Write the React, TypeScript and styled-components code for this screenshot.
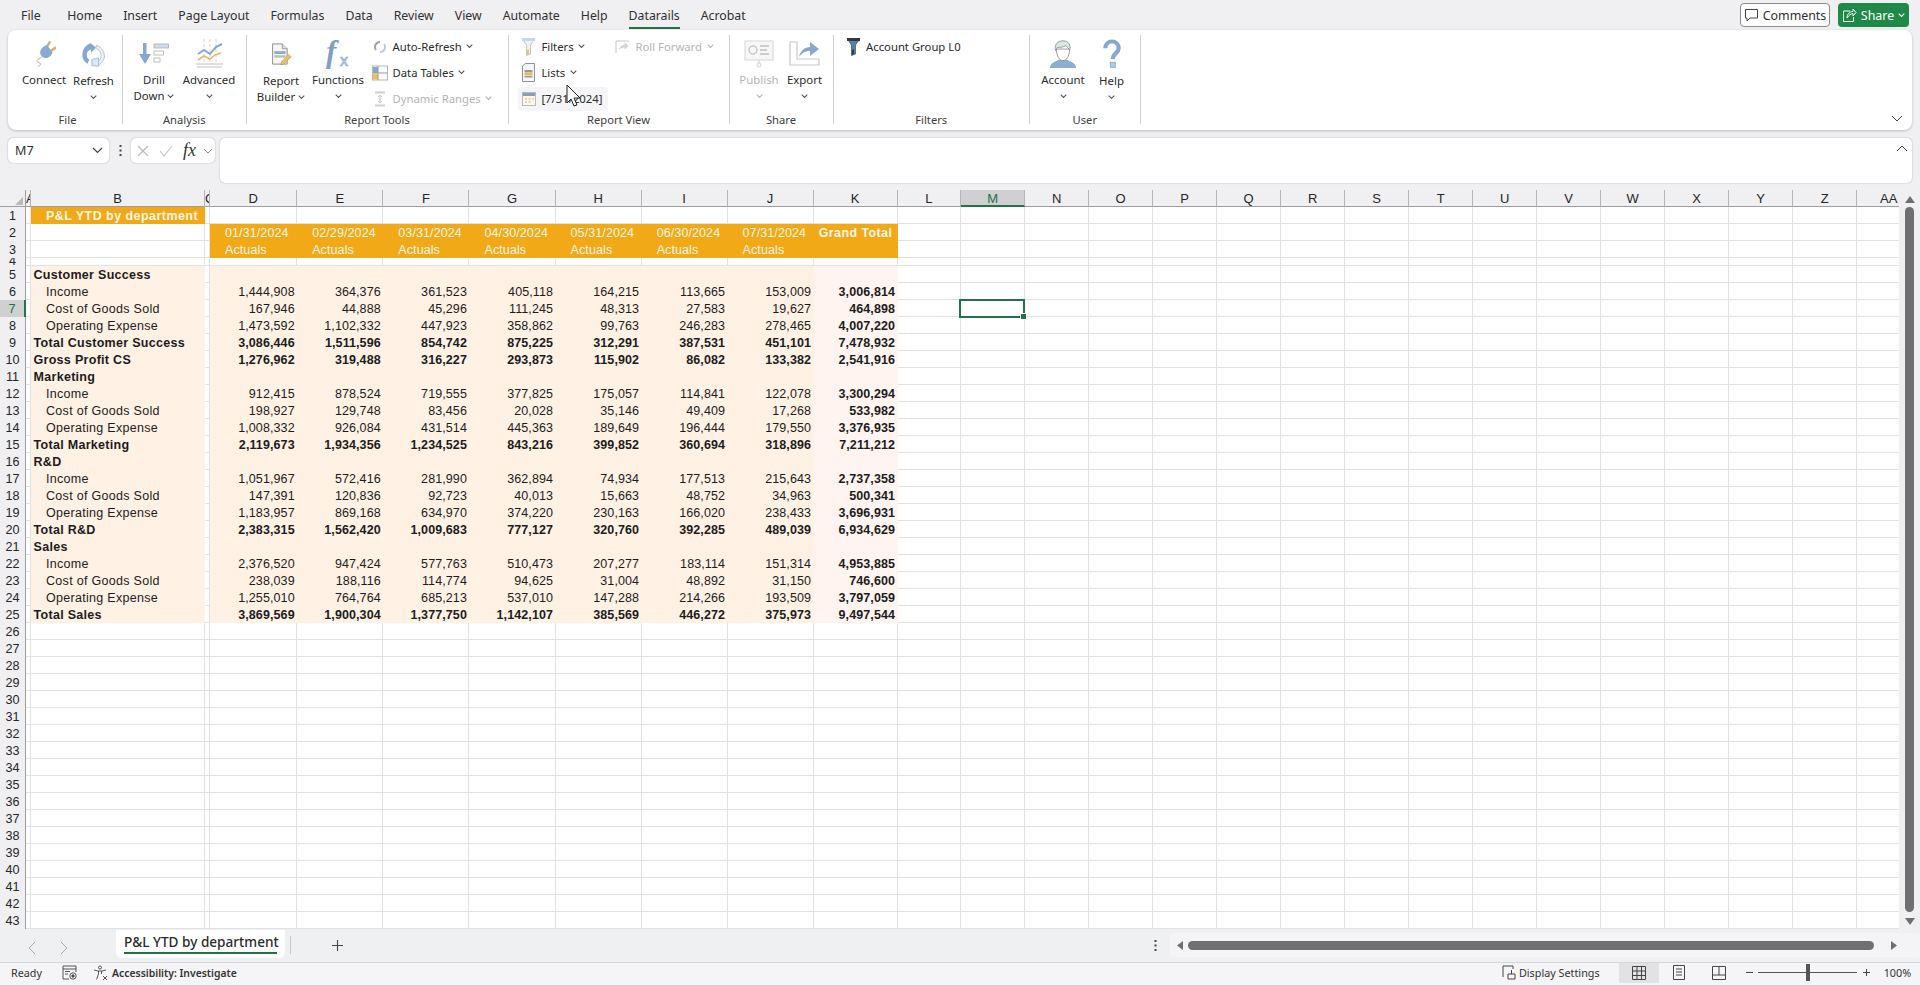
import React from 'react';
import styled, { createGlobalStyle } from 'styled-components';

const GlobalStyle = createGlobalStyle`
  html, body { margin: 0; padding: 0; background: #f0eff2; overflow: hidden; }
  #root { width: 1920px; height: 986px; }
  * { box-sizing: border-box; }
`;

const UI = '"Noto Sans", "Open Sans", sans-serif';
const SHEET = '"Liberation Sans", Arial, sans-serif';
const GREEN = '#217346';

const Page = styled.div`
  position: relative;
  width: 1920px;
  height: 986px;
  display: flex;
  flex-direction: column;
  background: #f0eff2;
  font-family: ${UI};
  color: #262626;
  overflow: hidden;
`;

/* ---------- title tabs ---------- */
const MenuBar = styled.div`
  height: 30px;
  display: flex;
  align-items: center;
  padding: 0 11px 0 21px;
`;
const MenuTab = styled.div<{ $active?: boolean }>`
  margin-right: 21px;
  font-size: 12.3px;
  color: #303030;
  border-bottom: ${p => (p.$active ? `2px solid ${GREEN}` : '2px solid transparent')};
  height: 28px;
  line-height: 29px;
  margin-top: 0;
  &:first-child { margin-right: 26.5px; }
`;
const MenuSpacer = styled.div`
  flex: 1;
`;
const CommentsButton = styled.div`
  width: 90px;
  height: 24px;
  border: 1px solid #8a8a8a;
  border-radius: 4px;
  background: #fdfdfd;
  display: flex;
  align-items: center;
  justify-content: center;
  gap: 4px;
  font-size: 12.4px;
  color: #303030;
  margin-right: 8px;
`;
const ShareButton = styled.div`
  width: 71px;
  height: 24px;
  border-radius: 4px;
  background: #1f8a47;
  display: flex;
  align-items: center;
  justify-content: center;
  gap: 4px;
  font-size: 12.4px;
  color: #fff;
`;

/* ---------- ribbon ---------- */
const Ribbon = styled.div`
  height: 100px;
  margin: 0 8px;
  padding-top: 5px;
  background: #fff;
  border-radius: 8px;
  box-shadow: 0 1px 3px rgba(0, 0, 0, 0.22);
  display: flex;
`;
const Group = styled.div<{ $width: number }>`
  width: ${p => p.$width}px;
  height: 89px;
  border-right: 1px solid #d0d0d2;
  display: flex;
  flex-direction: column;
`;
const GroupBody = styled.div<{ $pad: number }>`
  height: 77px;
  flex: none;
  padding-left: ${p => p.$pad}px;
  display: flex;
`;
const GroupLabel = styled.div<{ $shift?: number }>`
  height: 15px;
  flex: none;
  line-height: 15px;
  font-size: 11.2px;
  text-align: center;
  color: #404040;
  padding-left: ${p => p.$shift || 0}px;
`;
const LargeButton = styled.div<{ $width: number; $disabled?: boolean }>`
  width: ${p => p.$width}px;
  display: flex;
  flex-direction: column;
  align-items: center;
  flex: none;
  font-size: 11.4px;
  line-height: 16px;
  color: ${p => (p.$disabled ? '#b4b4b6' : '#2a2a2a')};
  white-space: nowrap;
`;
const LargeIcon = styled.div<{ $h?: number }>`
  height: ${p => p.$h || 37}px;
  width: 100%;
  display: flex;
  align-items: center;
  justify-content: center;
  flex: none;
`;
const LabelLine = styled.div`
  height: 16px;
  display: flex;
  align-items: center;
  gap: 3px;
`;
const SmallStack = styled.div<{ $left?: number; $width?: number }>`
  margin-top: -1.5px;
  margin-left: ${p => p.$left || 0}px;
  width: ${p => (p.$width ? `${p.$width}px` : 'auto')};
  display: grid;
  grid-auto-rows: 26px;
  flex: none;
`;
const SmallButton = styled.div<{ $disabled?: boolean; $hover?: boolean }>`
  height: ${p => (p.$hover ? '24px' : '26px')};
  margin-top: ${p => (p.$hover ? '1px' : '0')};
  padding-left: 3px;
  display: flex;
  align-items: center;
  gap: 4.5px;
  font-size: 11.3px;
  white-space: nowrap;
  border-radius: 4px;
  background: ${p => (p.$hover ? '#f5f5f7' : 'transparent')};
  color: ${p => (p.$disabled ? '#b4b4b6' : '#2a2a2a')};
`;
const SmallIcon = styled.div`
  width: 16px;
  height: 16px;
  flex: none;
  display: flex;
  align-items: center;
  justify-content: center;
`;
const Collapse = styled.div`
  margin-left: auto;
  margin-right: 9px;
  align-self: flex-end;
  margin-bottom: 8px;
  display: flex;
`;

/* ---------- formula bar ---------- */
const FormulaRow = styled.div`
  height: 45px;
  margin: 8px 8px 7px;
  display: flex;
  align-items: flex-start;
`;
const NameBox = styled.div`
  width: 101px;
  height: 25px;
  background: #fff;
  border-radius: 5px;
  box-shadow: 0 0 1.5px rgba(0, 0, 0, 0.35);
  display: flex;
  align-items: center;
  justify-content: space-between;
  padding: 0 6px 0 7px;
  font-size: 12.6px;
  color: #333;
`;
const Dots = styled.div`
  width: 22px;
  height: 25px;
  display: flex;
  align-items: center;
  justify-content: center;
`;
const FxBox = styled.div`
  width: 84px;
  height: 25px;
  background: #fff;
  border-radius: 5px;
  box-shadow: 0 0 1.5px rgba(0, 0, 0, 0.35);
  display: flex;
  align-items: center;
  gap: 10px;
  padding-left: 6px;
  margin-right: 5px;
`;
const FxGlyph = styled.span`
  font-family: "Liberation Serif", serif;
  font-style: italic;
  font-size: 18px;
  color: #333;
  width: 13px;
  margin-right: -3px;
`;
const FormulaInput = styled.div`
  flex: 1;
  height: 45px;
  background: #fff;
  border-radius: 5px;
  box-shadow: 0 0 1.5px rgba(0, 0, 0, 0.35);
  display: flex;
  justify-content: flex-end;
  padding: 7px 4px 0 0;
`;

/* ---------- sheet ---------- */
const SheetArea = styled.div`
  height: 739px;
  display: flex;
`;
const GridPane = styled.div`
  width: 1899px;
  overflow: hidden;
  flex: none;
  background: #fff;
`;
const widths = [26, 5, 174, 5, 87.2, 86.1, 86.2, 86.1, 86.1, 85.9, 86, 84, 63.6,
  64, 64, 64, 64, 64, 64, 64, 64, 64, 64, 64, 64, 64, 64, 64];
const template = widths.map(w => `${w}px`).join(' ');
const RowGrid = styled.div<{ $h?: number }>`
  display: grid;
  grid-template-columns: ${template};
  height: ${p => p.$h || 17}px;
  width: 2200px;
`;
const ColHead = styled.div<{ $selected?: boolean }>`
  height: 17px;
  background: ${p => (p.$selected ? '#d0cfd2' : '#f0eff2')};
  border-right: 1px solid #b5b5b7;
  border-bottom: ${p => (p.$selected ? `2px solid ${GREEN}` : '1px solid #9d9d9f')};
  font-family: ${SHEET};
  font-size: 13px;
  line-height: 18px;
  text-align: center;
  color: ${p => (p.$selected ? GREEN : '#262626')};
  overflow: hidden;
`;
const Corner = styled.div`
  height: 17px;
  background: #f0eff2;
  border-right: 1px solid #9d9d9f;
  border-bottom: 1px solid #9d9d9f;
  display: flex;
  align-items: flex-end;
  justify-content: flex-end;
  padding: 0 2px 1px 0;
`;
const RowHead = styled.div<{ $selected?: boolean; $squeezed?: boolean }>`
  background: ${p => (p.$selected ? '#d0cfd2' : '#f0eff2')};
  border-right: ${p => (p.$selected ? `2px solid ${GREEN}` : '1px solid #9d9d9f')};
  font-family: ${SHEET};
  font-size: 12.6px;
  line-height: ${p => (p.$squeezed ? '6px' : '19px')};
  text-align: center;
  color: ${p => (p.$selected ? GREEN : '#262626')};
  overflow: hidden;
`;
type Fill = 'none' | 'orange' | 'peach' | 'light';
const fills: Record<Fill, string> = { none: '#fff', orange: '#f1a918', peach: '#fff1e4', light: '#fff4ef' };
const Cell = styled.div<{ $fill?: Fill; $align?: string; $bold?: boolean; $pad?: number; $active?: boolean; $track?: number }>`
  position: relative;
  background: ${p => fills[p.$fill || 'none']};
  ${p => ((p.$fill || 'none') === 'none' ? 'border-right: 1px solid #e2e1e4; border-bottom: 1px solid #e2e1e4;' : '')}
  font-family: ${SHEET};
  font-size: 12.5px;
  line-height: 19px;
  letter-spacing: ${p => p.$track ?? 0.1}px;
  font-weight: ${p => (p.$bold ? 700 : 400)};
  text-align: ${p => p.$align || 'left'};
  padding: ${p => (p.$align === 'right' ? `0 ${p.$pad ?? 2.5}px 0 0` : p.$align === 'center' ? '0' : `0 0 0 ${p.$pad ?? 3}px`)};
  color: ${p => (p.$fill === 'orange' ? '#fdf6e6' : '#1c1c1c')};
  white-space: nowrap;
  overflow: ${p => (p.$active ? 'visible' : 'hidden')};
`;
const Selection = styled.div`
  position: absolute;
  left: -2px;
  top: -1px;
  width: 66px;
  height: 19px;
  border: 2px solid ${GREEN};
  z-index: 2;
  &::after {
    content: '';
    position: absolute;
    right: -4px;
    bottom: -4px;
    width: 5px;
    height: 5px;
    background: ${GREEN};
    border: 0.5px solid #fff;
  }
`;
const VScroll = styled.div`
  flex: 1;
  display: flex;
  flex-direction: column;
  align-items: center;
  padding: 6px 0 0 0;
  background: #f0eff2;
`;
const VThumb = styled.div`
  width: 9px;
  height: 705px;
  margin: 4px 0 6px;
  border-radius: 5px;
  background: #6f6e71;
`;

/* ---------- sheet tabs ---------- */
const SheetTabs = styled.div`
  height: 33px;
  display: flex;
  background: #eef0f1;
`;
const NavArrows = styled.div`
  width: 116px;
  padding: 4px 0 0 28px;
  display: flex;
  align-items: center;
  gap: 24px;
`;
const SheetTab = styled.div`
  width: 169px;
  height: 28px;
  margin-top: 1px;
  background: #fff;
  border-radius: 0 0 6px 6px;
  padding: 0 8px;
  font-size: 13.6px;
  font-weight: 500;
  color: #2b2b2b;
  text-align: center;
  white-space: nowrap;
  display: flex;
  flex-direction: column;
  align-items: stretch;
`;
const SheetTabText = styled.div`
  height: 24px;
  line-height: 24px;
  border-bottom: 2px solid ${GREEN};
`;
const TabDivider = styled.div`
  width: 1px;
  height: 18px;
  margin: 7px 0 0 5px;
  background: #c8c8ca;
`;
const AddSheet = styled.div`
  width: 92px;
  display: flex;
  align-items: center;
  justify-content: center;
`;
const TabDots = styled.div`
  margin-left: auto;
  width: 30px;
  display: flex;
  align-items: center;
  justify-content: center;
`;
const HScroll = styled.div`
  width: 750px;
  height: 24px;
  margin: 4px 0 0 0;
  background: #f4f4f6;
  border-radius: 4px;
  display: flex;
  align-items: center;
  padding: 0 7px;
`;
const HThumb = styled.div`
  width: 686px;
  height: 9px;
  margin: 0 17.5px 0 3.5px;
  border-radius: 5px;
  background: #6f6e71;
`;

/* ---------- status bar ---------- */
const StatusBar = styled.div`
  height: 24px;
  padding-bottom: 3px;
  background: #f5f4f7;
  border-top: 1px solid #d6d6d8;
  border-bottom: 1px solid #bfd3da;
  display: flex;
  align-items: center;
  font-size: 10.8px;
  color: #333;
`;
const StatusItem = styled.div<{ $left?: number; $bold?: boolean }>`
  display: flex;
  align-items: center;
  gap: 3px;
  margin-left: ${p => p.$left || 0}px;
  font-size: ${p => (p.$bold ? '10.4px' : '10.8px')};
  font-weight: ${p => (p.$bold ? 600 : 400)};
  white-space: nowrap;
`;
const ViewGroup = styled.div`
  display: flex;
  margin-left: 19px;
`;
const ViewButton = styled.div<{ $selected?: boolean }>`
  width: 40px;
  height: 20px;
  display: flex;
  align-items: center;
  justify-content: center;
  background: ${p => (p.$selected ? '#e2e2e4' : 'transparent')};
`;
const Zoomer = styled.div`
  display: flex;
  align-items: center;
  margin-left: 6px;
`;
const SliderTrack = styled.div`
  position: relative;
  width: 99px;
  height: 1px;
  margin: 0 5px 0 4px;
  background: #555;
`;
const SliderThumb = styled.div`
  position: absolute;
  left: 48px;
  top: -8px;
  width: 4px;
  height: 17px;
  background: #555;
`;
const Cursor = styled.svg`
  position: absolute;
  left: 566px;
  top: 84px;
  z-index: 5;
`;

/* ---------- icons ---------- */
const Chev = ({ c = '#555', w = 7 }: { c?: string; w?: number }) => (
  <svg width={w} height={w * 0.6} viewBox="0 0 10 6"><path d="M1 1l4 4 4-4" fill="none" stroke={c} strokeWidth="1.5" /></svg>
);
const PlugIcon = () => (
  <svg width="24" height="29" viewBox="0 0 34 38">
    <path d="M21 10l4-7M27 15l6-4" stroke="#d9ae70" strokeWidth="3.500" strokeLinecap="round" />
    <path d="M21 7l8 10c-1 6-7 10-12 8-5-2-7-7-4-12 2-3 5-5 8-6z" fill="#8aaad2" />
    <path d="M14 24c-3 2-6 3-7 5-1 3 5 2 5 5s-3 3-4 3" fill="none" stroke="#a6a6a6" strokeWidth="1.200" />
  </svg>
);
const RefreshIcon = () => (
  <svg width="27" height="27" viewBox="0 0 30 32">
    <path d="M11 3C4 6 1 12 2 19c1 4 3 6 6 8l2-5c-2-1-3-3-3-6 0-3 2-5 5-6v4l6-6-7-6z" fill="#86a8d0" />
    <path d="M18 5c7 2 10 8 10 14-1 4-3 7-6 9l-2 0v-4c3-1 4-4 4-7 0-4-2-6-6-8z" fill="#edf1f6" stroke="#a8bbd0" strokeWidth="1" />
    <path d="M13 22l8-2v10l-8-1z" fill="#dde9f2" stroke="#9db8cc" strokeWidth="1" />
  </svg>
);
const DrillIcon = () => (
  <svg width="30" height="21" viewBox="0 0 30 21">
    <path d="M4 0h3.500v11H12l-6 10-6-10h4z" fill="#86a8d0" />
    <rect x="15" y="1" width="14.500" height="4" fill="#cddef0" stroke="#b0b0b0" strokeWidth=".8" />
    <rect x="15" y="8" width="9.500" height="4" fill="#fff" stroke="#b0b0b0" strokeWidth=".8" />
    <rect x="15" y="15" width="6" height="4" fill="#fff" stroke="#b0b0b0" strokeWidth=".8" />
  </svg>
);
const AdvancedIcon = () => (
  <svg width="27" height="29" viewBox="0 0 27 29">
    <path d="M8 0v25M14 0v25M20 0v25" stroke="#c8c8c8" strokeWidth=".8" strokeDasharray="3 2" />
    <path d="M0 25h27M1 28h25" stroke="#b0b0b0" strokeWidth=".8" />
    <path d="M2 15l6-4 6 4 6-7 6-3" fill="none" stroke="#86a8d0" strokeWidth="2" />
    <path d="M2 21l6-4 6 3 5-4 6-2" fill="none" stroke="#dcbc6c" strokeWidth="1.600" />
  </svg>
);
const BuilderIcon = () => (
  <svg width="21" height="22" viewBox="0 0 26 27">
    <path d="M2 1h12l6 6v19H2z" fill="#f6f6f6" stroke="#8c8c8c" strokeWidth="1.200" />
    <path d="M14 1v6h6" fill="#ddd" stroke="#8c8c8c" strokeWidth="1" />
    <rect x="4" y="10" width="14" height="3.500" fill="#8fabcd" />
    <rect x="4" y="15" width="14" height="3" fill="#bdbdbd" />
    <path d="M13 23l9-9 3 3-9 9-4 1z" fill="#e8c06a" stroke="#b8954a" strokeWidth=".7" />
  </svg>
);
const FunctionsIcon = () => (
  <svg width="38" height="36" viewBox="0 0 38 36">
    <text x="7" y="26" fontFamily="Liberation Serif, serif" fontStyle="italic" fontWeight="700" fontSize="31" fill="#7f9fc8">f</text>
    <text x="21" y="30" fontFamily="Liberation Sans, sans-serif" fontSize="16" fill="#e3e9f1" stroke="#8aa3bf" strokeWidth=".7">x</text>
  </svg>
);
const PublishIcon = () => (
  <svg width="30" height="28" viewBox="0 0 30 28" opacity=".55">
    <rect x="1" y="1" width="28" height="19" fill="#f2f2f2" stroke="#b5b5b5" />
    <circle cx="9" cy="10" r="4" fill="none" stroke="#999" strokeWidth="1.500" />
    <path d="M16 6h9M16 10h7M16 14h9" stroke="#a5a5a5" strokeWidth="2" />
    <path d="M15 20v3" stroke="#aaa" /><circle cx="15" cy="25" r="2" fill="none" stroke="#aaa" />
  </svg>
);
const ExportIcon = () => (
  <svg width="31" height="25" viewBox="0 0 31 25">
    <path d="M1 1h7v17h22v6H1z" fill="#fff" stroke="#c9c9c9" strokeWidth="1.200" />
    <path d="M10 16c1-6 6-10 11-10V1l9 7-9 7v-5c-5 0-8 2-11 6z" fill="#86a8d0" />
  </svg>
);
const AccountIcon = () => (
  <svg width="28" height="30" viewBox="0 0 34 36">
    <path d="M1 35c1-7 8-8 11-10h10c3 2 10 3 11 10z" fill="#8cadd6" />
    <path d="M9 12c0 9 4 14 8 14s8-5 8-14z" fill="#fff" stroke="#888" strokeWidth="1" />
    <path d="M8 14C6 6 11 2 17 2c7 0 10 5 8 12-1-3-3-5-5-6-3 2-8 2-10 2z" fill="#dbe9e5" stroke="#8a8a8a" strokeWidth="1" />
  </svg>
);
const HelpIcon = () => (
  <svg width="20" height="30" viewBox="0 0 24 36">
    <path d="M4 11c0-5 4-8 8-8s8 3 8 8c0 6-7 6-7 13" fill="none" stroke="#86a8d0" strokeWidth="5" />
    <rect x="10" y="28" width="6" height="6" fill="#b3cae4" stroke="#86a8d0" />
  </svg>
);
const AutoIcon = () => (
  <svg width="14" height="14" viewBox="0 0 14 14">
    <path d="M7 2a5 5 0 0 0-4 8" fill="none" stroke="#a4a4a4" strokeWidth="2" />
    <path d="M7 12a5 5 0 0 0 4-8" fill="none" stroke="#bdcbdc" strokeWidth="2" />
  </svg>
);
const TableIcon = () => (
  <svg width="16" height="16" viewBox="0 0 16 16">
    <rect x=".5" y="1" width="15" height="14" fill="#fff" stroke="#b5b5b5" />
    <rect x="1" y="9" width="5" height="5.500" fill="#f0c14e" />
    <rect x="1" y="2" width="5" height="6" fill="#86a8d0" />
    <path d="M6 1v14M1 8h14" stroke="#9a9a9a" />
  </svg>
);
const RangesIcon = () => (
  <svg width="14" height="16" viewBox="0 0 14 16" opacity=".55">
    <path d="M2 1.500h10M2 14.500h10" stroke="#aaa" strokeWidth="2" />
    <path d="M7 4v8M5 6l2-2 2 2M5 10l2 2 2-2" fill="none" stroke="#999" />
  </svg>
);
const FunnelIcon = ({ dark }: { dark?: boolean }) => (
  <svg width="15" height="19" viewBox="0 0 15 19">
    <path d="M1 1.500h13L9.500 8v9l-4 1.500V8z" fill={dark ? '#5d7f9e' : '#f1f1f1'} stroke={dark ? '#3f5f7c' : '#b8b8b8'} strokeWidth=".8" />
    <rect x="1" y="1" width="13" height="3" fill={dark ? '#2f3b46' : '#c7d7e7'} />
    <path d="M6 13l2-1v5l-2 1z" fill={dark ? '#2f3b46' : '#e4c56e'} />
  </svg>
);
const ListIcon = () => (
  <svg width="13" height="19" viewBox="0 0 13 19">
    <path d="M.5 3l3-2.500h9v18h-12z" fill="#f6f6f6" stroke="#777" strokeWidth=".8" />
    <rect x="2.500" y="7" width="8" height="2.500" fill="#9a9a9a" />
    <rect x="2.500" y="10" width="8" height="2.500" fill="#e3bd57" />
    <rect x="2.500" y="13" width="8" height="1.500" fill="#9a9a9a" />
  </svg>
);
const CalendarIcon = () => (
  <svg width="14" height="14" viewBox="0 0 14 14">
    <rect x=".5" y=".5" width="13" height="13" fill="#faf7ef" stroke="#b9b9b9" />
    <rect x="1" y="1" width="12" height="3" fill="#8d9db8" />
    <path d="M3 7h2M6.500 7h2M10 7h2M3 10h2M6.500 10h2" stroke="#d9b35a" />
  </svg>
);
const RollIcon = () => (
  <svg width="15" height="14" viewBox="0 0 15 14" opacity=".55">
    <path d="M1 13V1M1 1h13" stroke="#999" />
    <path d="M4 9c2-3 4-4 6-4V3l3 3-3 3V7c-2 0-4 1-6 2z" fill="#a8b6c6" stroke="#999" strokeWidth=".5" />
  </svg>
);
const AccessIcon = () => (
  <svg width="16" height="16" viewBox="0 0 16 16" fill="none" stroke="#444" strokeWidth=".9">
    <circle cx="7" cy="2.500" r="1.500" /><path d="M1 5l4 1h4l4-1M5.500 6v3l-2 5.500M8.500 6v3M10 11l4 4M14 11l-4 4" />
  </svg>
);
const MacroIcon = () => (
  <svg width="15" height="15" viewBox="0 0 15 15" fill="none" stroke="#444" strokeWidth=".9">
    <path d="M1 1h13v3H1zM1 4v10h6M14 4v3" /><path d="M3 6.500h5M3 9h3" /><circle cx="11" cy="11" r="3.200" /><circle cx="11" cy="11" r="1.200" fill="#444" />
  </svg>
);
const Line = ({ d, w, h, c = '#555', sw = 1 }: { d: string; w: number; h: number; c?: string; sw?: number }) => (
  <svg width={w} height={h} viewBox={`0 0 ${w} ${h}`}><path d={d} fill="none" stroke={c} strokeWidth={sw} /></svg>
);

/* ---------- data ---------- */
const tabs = ['File', 'Home', 'Insert', 'Page Layout', 'Formulas', 'Data', 'Review', 'View', 'Automate', 'Help', 'Datarails', 'Acrobat'];
const colNames = ['A', 'B', 'C', 'D', 'E', 'F', 'G', 'H', 'I', 'J', 'K', 'L', 'M', 'N', 'O', 'P', 'Q', 'R', 'S', 'T', 'U', 'V', 'W', 'X', 'Y', 'Z', 'AA'];
const dates = ['01/31/2024', '02/29/2024', '03/31/2024', '04/30/2024', '05/31/2024', '06/30/2024', '07/31/2024'];

type DataRow = { r: number; label: string; bold?: boolean; indent?: boolean; v?: string[] };
const I = 'Income', C = 'Cost of Goods Sold', O = 'Operating Expense';
const dataRows: DataRow[] = [
  { r: 5, label: 'Customer Success', bold: true },
  { r: 6, label: I, indent: true, v: ['1,444,908', '364,376', '361,523', '405,118', '164,215', '113,665', '153,009', '3,006,814'] },
  { r: 7, label: C, indent: true, v: ['167,946', '44,888', '45,296', '111,245', '48,313', '27,583', '19,627', '464,898'] },
  { r: 8, label: O, indent: true, v: ['1,473,592', '1,102,332', '447,923', '358,862', '99,763', '246,283', '278,465', '4,007,220'] },
  { r: 9, label: 'Total Customer Success', bold: true, v: ['3,086,446', '1,511,596', '854,742', '875,225', '312,291', '387,531', '451,101', '7,478,932'] },
  { r: 10, label: 'Gross Profit CS', bold: true, v: ['1,276,962', '319,488', '316,227', '293,873', '115,902', '86,082', '133,382', '2,541,916'] },
  { r: 11, label: 'Marketing', bold: true },
  { r: 12, label: I, indent: true, v: ['912,415', '878,524', '719,555', '377,825', '175,057', '114,841', '122,078', '3,300,294'] },
  { r: 13, label: C, indent: true, v: ['198,927', '129,748', '83,456', '20,028', '35,146', '49,409', '17,268', '533,982'] },
  { r: 14, label: O, indent: true, v: ['1,008,332', '926,084', '431,514', '445,363', '189,649', '196,444', '179,550', '3,376,935'] },
  { r: 15, label: 'Total Marketing', bold: true, v: ['2,119,673', '1,934,356', '1,234,525', '843,216', '399,852', '360,694', '318,896', '7,211,212'] },
  { r: 16, label: 'R&D', bold: true },
  { r: 17, label: I, indent: true, v: ['1,051,967', '572,416', '281,990', '362,894', '74,934', '177,513', '215,643', '2,737,358'] },
  { r: 18, label: C, indent: true, v: ['147,391', '120,836', '92,723', '40,013', '15,663', '48,752', '34,963', '500,341'] },
  { r: 19, label: O, indent: true, v: ['1,183,957', '869,168', '634,970', '374,220', '230,163', '166,020', '238,433', '3,696,931'] },
  { r: 20, label: 'Total R&D', bold: true, v: ['2,383,315', '1,562,420', '1,009,683', '777,127', '320,760', '392,285', '489,039', '6,934,629'] },
  { r: 21, label: 'Sales', bold: true },
  { r: 22, label: I, indent: true, v: ['2,376,520', '947,424', '577,763', '510,473', '207,277', '183,114', '151,314', '4,953,885'] },
  { r: 23, label: C, indent: true, v: ['238,039', '188,116', '114,774', '94,625', '31,004', '48,892', '31,150', '746,600'] },
  { r: 24, label: O, indent: true, v: ['1,255,010', '764,764', '685,213', '537,010', '147,288', '214,266', '193,509', '3,797,059'] },
  { r: 25, label: 'Total Sales', bold: true, v: ['3,869,569', '1,900,304', '1,377,750', '1,142,107', '385,569', '446,272', '375,973', '9,497,544'] },
];

const blanks = (n: number, start = 0, active?: number) =>
  Array.from({ length: n }, (_, i) => (
    <Cell key={`b${start + i}`} $active={start + i === active}>
      {start + i === active ? <Selection /> : null}
    </Cell>
  ));
const TRAILING = 16; // L..AA

const Sheet = () => (
  <GridPane>
    <RowGrid>
      <Corner>
        <svg width="8" height="8" viewBox="0 0 8 8"><path d="M8 0v8H0z" fill="#b9b9bb" /></svg>
      </Corner>
      {colNames.map(c => <ColHead key={c} $selected={c === 'M'}>{c}</ColHead>)}
    </RowGrid>
    <RowGrid>
      <RowHead>1</RowHead><Cell />
      <Cell $fill="orange" $bold $pad={15} $track={0.45}>P&amp;L YTD by department</Cell>
      {blanks(1)}
      {blanks(8 + TRAILING, 10)}
    </RowGrid>
    <RowGrid>
      <RowHead>2</RowHead><Cell /><Cell /><Cell />
      {dates.map(d => <Cell key={d} $fill="orange" $pad={15}>{d}</Cell>)}
      <Cell $fill="orange" $bold $align="center" $track={0.4}>Grand Total</Cell>
      {blanks(TRAILING, 20)}
    </RowGrid>
    <RowGrid>
      <RowHead>3</RowHead><Cell /><Cell /><Cell />
      {dates.map(d => <Cell key={d} $fill="orange" $pad={15}>Actuals</Cell>)}
      <Cell $fill="orange" />
      {blanks(TRAILING, 40)}
    </RowGrid>
    <RowGrid $h={8}>
      <RowHead $squeezed>4</RowHead><Cell /><Cell /><Cell />
      {blanks(8 + TRAILING, 60)}
    </RowGrid>
    {dataRows.map(row => (
      <RowGrid key={row.r}>
        <RowHead $selected={row.r === 7}>{row.r}</RowHead>
        <Cell />
        <Cell $fill="peach" $bold={row.bold} $pad={row.indent ? 15 : 2.5} $track={0.3}>{row.label}</Cell>
        <Cell />
        {Array.from({ length: 8 }, (_, i) => (
          <Cell
            key={i}
            $fill={i === 7 ? 'light' : 'peach'}
            $align="right"
            $bold={row.bold || i === 7}
          >
            {row.v ? row.v[i] : ''}
          </Cell>
        ))}
        {blanks(TRAILING, row.r * 100, row.r === 7 ? 701 : undefined)}
      </RowGrid>
    ))}
    {Array.from({ length: 18 }, (_, i) => (
      <RowGrid key={i}>
        <RowHead>{26 + i}</RowHead>
        {blanks(27, (26 + i) * 100)}
      </RowGrid>
    ))}
  </GridPane>
);

const Menu = () => (
  <MenuBar>
    {tabs.map(t => <MenuTab key={t} $active={t === 'Datarails'}>{t}</MenuTab>)}
    <MenuSpacer />
    <CommentsButton>
      <Line w={15} h={14} d="M1.500 1.500h12v8.500H6l-3 3v-3H1.500z" c="#444" />
      Comments
    </CommentsButton>
    <ShareButton>
      <Line w={15} h={15} c="#fff" d="M8 3H1.500v10.500h10V9M5 10c0-4 3-6.500 6-6.500V1l3 3.500-3 3.500V5.500c-2 0-4 1.500-6 4.500z" />
      Share
      <Chev c="#fff" />
    </ShareButton>
  </MenuBar>
);

const RibbonBar = () => (
  <Ribbon>
    <Group $width={115}>
      <GroupBody $pad={10}>
        <LargeButton $width={52}><LargeIcon><PlugIcon /></LargeIcon><LabelLine>Connect</LabelLine></LargeButton>
        <LargeButton $width={47}><LargeIcon $h={38}><RefreshIcon /></LargeIcon><LabelLine>Refresh</LabelLine><LabelLine><Chev /></LabelLine></LargeButton>
      </GroupBody>
      <GroupLabel $shift={5}>File</GroupLabel>
    </Group>
    <Group $width={123.5}>
      <GroupBody $pad={6}>
        <LargeButton $width={50}><LargeIcon><DrillIcon /></LargeIcon><LabelLine>Drill</LabelLine><LabelLine>Down <Chev /></LabelLine></LargeButton>
        <LargeButton $width={60}><LargeIcon><AdvancedIcon /></LargeIcon><LabelLine>Advanced</LabelLine><LabelLine><Chev /></LabelLine></LargeButton>
      </GroupBody>
      <GroupLabel>Analysis</GroupLabel>
    </Group>
    <Group $width={262}>
      <GroupBody $pad={5.5}>
        <LargeButton $width={58}><LargeIcon $h={38}><BuilderIcon /></LargeIcon><LabelLine>Report</LabelLine><LabelLine>Builder <Chev /></LabelLine></LargeButton>
        <LargeButton $width={56}><LargeIcon><FunctionsIcon /></LargeIcon><LabelLine>Functions</LabelLine><LabelLine><Chev /></LabelLine></LargeButton>
        <SmallStack $left={3}>
          <SmallButton><SmallIcon><AutoIcon /></SmallIcon>Auto-Refresh <Chev /></SmallButton>
          <SmallButton><SmallIcon><TableIcon /></SmallIcon>Data Tables <Chev /></SmallButton>
          <SmallButton $disabled><SmallIcon><RangesIcon /></SmallIcon>Dynamic Ranges <Chev c="#b4b4b6" /></SmallButton>
        </SmallStack>
      </GroupBody>
      <GroupLabel>Report Tools</GroupLabel>
    </Group>
    <Group $width={221}>
      <GroupBody $pad={9.4}>
        <SmallStack $width={90}>
          <SmallButton><SmallIcon><FunnelIcon /></SmallIcon>Filters <Chev /></SmallButton>
          <SmallButton><SmallIcon><ListIcon /></SmallIcon>Lists <Chev /></SmallButton>
          <SmallButton $hover><SmallIcon><CalendarIcon /></SmallIcon>[7/31/2024]</SmallButton>
        </SmallStack>
        <SmallStack $left={4}>
          <SmallButton $disabled><SmallIcon><RollIcon /></SmallIcon>Roll Forward <Chev c="#b4b4b6" /></SmallButton>
        </SmallStack>
      </GroupBody>
      <GroupLabel>Report View</GroupLabel>
    </Group>
    <Group $width={104}>
      <GroupBody $pad={7.5}>
        <LargeButton $width={44} $disabled><LargeIcon><PublishIcon /></LargeIcon><LabelLine>Publish</LabelLine><LabelLine><Chev c="#b4b4b6" /></LabelLine></LargeButton>
        <LargeButton $width={47}><LargeIcon><ExportIcon /></LargeIcon><LabelLine>Export</LabelLine><LabelLine><Chev /></LabelLine></LargeButton>
      </GroupBody>
      <GroupLabel>Share</GroupLabel>
    </Group>
    <Group $width={196.5}>
      <GroupBody $pad={9}>
        <SmallStack>
          <SmallButton><SmallIcon><FunnelIcon dark /></SmallIcon>Account Group L0</SmallButton>
        </SmallStack>
      </GroupBody>
      <GroupLabel>Filters</GroupLabel>
    </Group>
    <Group $width={110.6}>
      <GroupBody $pad={6}>
        <LargeButton $width={54}><LargeIcon><AccountIcon /></LargeIcon><LabelLine>Account</LabelLine><LabelLine><Chev /></LabelLine></LargeButton>
        <LargeButton $width={43}><LargeIcon $h={38}><HelpIcon /></LargeIcon><LabelLine>Help</LabelLine><LabelLine><Chev /></LabelLine></LargeButton>
      </GroupBody>
      <GroupLabel>User</GroupLabel>
    </Group>
    <Collapse><Line w={12} h={7} d="M1 1l5 5 5-5" c="#444" /></Collapse>
  </Ribbon>
);

const Formula = () => (
  <FormulaRow>
    <NameBox>M7<Line w={11} h={7} d="M1 1l4.500 4.500L10 1" c="#444" sw={1.2} /></NameBox>
    <Dots><Line w={3} h={13} c="#444" sw={2} d="M1.500 1v2M1.500 5.500v2M1.500 10v2" /></Dots>
    <FxBox>
      <Line w={12} h={12} c="#b9b9b9" sw={1.2} d="M1 1l10 10M11 1L1 11" />
      <Line w={14} h={12} c="#c4c4c4" sw={1.2} d="M1 6l4 5 8-10" />
      <FxGlyph>fx</FxGlyph>
      <Line w={10} h={6} c="#888" sw={1} d="M1 1l4 4 4-4" />
    </FxBox>
    <FormulaInput><Line w={12} h={7} d="M1 6l5-5 5 5" c="#444" /></FormulaInput>
  </FormulaRow>
);

const Tri = ({ d, w = 7, h = 9, c = '#6f6e71' }: { d: string; w?: number; h?: number; c?: string }) => (
  <svg width={w} height={h} viewBox={`0 0 ${w} ${h}`}><path d={d} fill={c} /></svg>
);

const Tabs = () => (
  <SheetTabs>
    <NavArrows>
      <Line w={8} h={14} c="#a8a8aa" d="M7 1L1 7l6 6" />
      <Line w={8} h={14} c="#a8a8aa" d="M1 1l6 6-6 6" />
    </NavArrows>
    <SheetTab><SheetTabText>P&amp;L YTD by department</SheetTabText></SheetTab>
    <TabDivider />
    <AddSheet><Line w={13} h={13} c="#444" sw={1.1} d="M6.500 1v11M1 6.500h11" /></AddSheet>
    <TabDots><Line w={3} h={13} c="#444" sw={2} d="M1.500 1v2M1.500 5.500v2M1.500 10v2" /></TabDots>
    <HScroll>
      <Tri d="M6 0v9L0 4.500z" />
      <HThumb />
      <Tri d="M0 0v9l6-4.500z" />
    </HScroll>
  </SheetTabs>
);

const Status = () => (
  <StatusBar>
    <StatusItem $left={11}>Ready</StatusItem>
    <StatusItem $left={20}><MacroIcon /></StatusItem>
    <StatusItem $left={16} $bold><AccessIcon />Accessibility: Investigate</StatusItem>
    <StatusItem $left={1265}>
      <Line w={14} h={15} c="#444" d="M1 12V1h10v3M6 9h7v5H6zM9.500 5v4" />
      Display Settings
    </StatusItem>
    <ViewGroup>
      <ViewButton $selected><Line w={14} h={14} c="#444" d="M.5.5h13v13H.5zM.5 5h13M.5 9.500h13M5 .5v13M9.500.5v13" /></ViewButton>
      <ViewButton><Line w={12} h={15} c="#444" d="M.5.5h11v14H.5zM3 4h6M3 7h6M3 10h6" /></ViewButton>
      <ViewButton><Line w={14} h={14} c="#444" d="M.5.5h13v13H.5zM.5 9h13M7 .5V9" /></ViewButton>
    </ViewGroup>
    <Zoomer>
      <Line w={9} h={3} c="#444" d="M1 1.500h7" />
      <SliderTrack><SliderThumb /></SliderTrack>
      <Line w={9} h={9} c="#444" d="M4.500 1v7M1 4.500h7" />
      <StatusItem $left={13}>100%</StatusItem>
    </Zoomer>
  </StatusBar>
);

export default function App() {
  return (
    <Page>
      <GlobalStyle />
      <Menu />
      <RibbonBar />
      <Formula />
      <SheetArea>
        <Sheet />
        <VScroll>
          <Tri d="M5 0l5 7H0z" w={10} h={7} />
          <VThumb />
          <Tri d="M0 0h10L5 7z" w={10} h={7} />
        </VScroll>
      </SheetArea>
      <Tabs />
      <Status />
      <Cursor width="15" height="24" viewBox="0 0 15 24">
        <path d="M1 1v18l4-4 3 7 3-1-3-7h6z" fill="#fff" stroke="#222" strokeWidth="1" />
      </Cursor>
    </Page>
  );
}
